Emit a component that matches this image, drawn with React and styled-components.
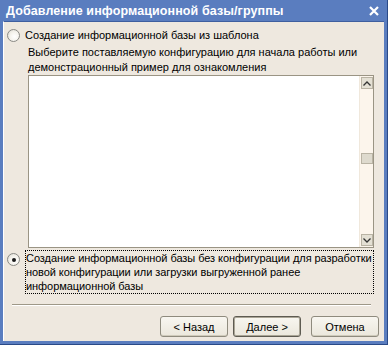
import styled, { createGlobalStyle } from 'styled-components'

const GlobalStyle = createGlobalStyle`
    html, body {
        margin: 0;
        padding: 0;
        background: #ffffff;
    }
    * {
        box-sizing: border-box;
    }
`;

const Window = styled.div`
    width: 388px;
    height: 345px;
    background-color: #5a7dbf;
    border-right: 1px solid #2a4a88;
    border-bottom: 1px solid #2a4a88;
    padding: 0 3px 3px 3px;
    display: flex;
    flex-direction: column;
    font-family: "Liberation Sans", Arial, sans-serif;
    font-size: 11px;
    color: #000;
    overflow: hidden;
`;

const TitleBar = styled.div`
    flex: none;
    height: 21px;
    display: flex;
    align-items: center;
    justify-content: space-between;
    padding: 0 5px 0 3px;
    color: #ffffff;
    font-weight: bold;
    font-size: 12.5px;
    letter-spacing: 0.1px;
    white-space: nowrap;
`;

const Client = styled.div`
    flex: 1;
    min-height: 0;
    background-color: #eee8df;
    border-top: 1px solid #3f5f9f;
    border-left: 1px solid #fff;
    display: flex;
    flex-direction: column;
    padding: 6px 10px 0 3px;
`;

const RadioRow = styled.div`
    flex: none;
    display: flex;
    align-items: flex-start;
    gap: 4px;
    margin-top: ${props => props.$top || 0}px;
`;

const Radio = styled.span`
    flex: none;
    width: 13px;
    height: 13px;
    margin-top: ${props => props.$offset || 0}px;
    margin-right: 1px;
    border-radius: 50%;
    border: 1px solid #8a8a86;
    background: radial-gradient(circle at 60% 60%, #ffffff 0%, #f4f2ec 50%, #d8d6ce 100%);
    display: flex;
    align-items: center;
    justify-content: center;
    &::after {
        content: '';
        display: ${props => (props.$checked ? 'block' : 'none')};
        width: 4px;
        height: 4px;
        border-radius: 50%;
        background: #1a1a1a;
    }
`;

const Label = styled.div`
    line-height: 15px;
    white-space: nowrap;
`;

const FocusLabel = styled.div`
    flex: 1;
    line-height: 14px;
    border: 1px dotted #000;
    padding: 0;
    white-space: nowrap;
    letter-spacing: -0.06px;
`;

const Description = styled.div`
    flex: none;
    margin: 2px 0 0 21px;
    line-height: 15px;
    white-space: nowrap;
`;

const ListBox = styled.div`
    flex: none;
    margin: 0 0 0 21px;
    height: 173px;
    border: 1px solid #9a9484;
    background: #ffffff;
    display: flex;
    justify-content: flex-end;
`;

const ScrollBar = styled.div`
    width: 14px;
    background: #fcf5ec;
    border-left: 1px solid #f0e8dc;
    display: flex;
    flex-direction: column;
    align-items: center;
    justify-content: space-between;
    padding: 1px 0 1px 1px;
`;

const ScrollButton = styled.div`
    width: 12px;
    height: 12px;
    background: #e4e0d4;
    border: 1px solid #b9b3a4;
    display: flex;
    align-items: center;
    justify-content: center;
`;

const Thumb = styled.div`
    width: 12px;
    height: 11px;
    background: #dedace;
    border: 1px solid #b9b3a4;
`;

const Track = styled.div`
    flex: 1;
    display: flex;
    flex-direction: column;
    justify-content: center;
    padding-bottom: 6px;
`;

const Separator = styled.div`
    flex: none;
    margin: 10px 3px 0 5px;
    height: 2px;
    border-top: 1px solid #9e9888;
    border-bottom: 1px solid #ffffff;
`;

const ButtonBar = styled.div`
    flex: none;
    display: flex;
    justify-content: flex-end;
    margin-top: 10px;
    margin-right: -5px;
`;

const Button = styled.div`
    width: 68px;
    height: 21px;
    margin-left: ${props => props.$gap || 0}px;
    border: 1px solid ${props => (props.$default ? '#5e5b52' : '#8f8b7e')};
    box-shadow: ${props => (props.$default ? 'inset 0 0 0 1px #aaa596' : 'inset 0 -1px 0 #cfcabb')};
    border-radius: 3px;
    background: linear-gradient(#f8f6f0, #ebe7dc);
    display: flex;
    align-items: center;
    justify-content: center;
    font-size: 11px;
`;

const Chevron = ({ up }) => (
    <svg width="8" height="5" viewBox="0 0 8 5">
        <path d={up ? 'M0.5 4.5 L4 1 L7.5 4.5' : 'M0.5 0.5 L4 4 L7.5 0.5'} stroke="#333" strokeWidth="1.3" fill="none" />
    </svg>
);

const CloseIcon = () => (
    <svg width="10" height="10" viewBox="0 0 10 10">
        <path d="M1 1 L9 9 M9 1 L1 9" stroke="#ffffff" strokeWidth="2.2" />
    </svg>
);

const App = () => {
    return (
        <Window>
            <GlobalStyle />
            <TitleBar>
                <span>Добавление информационной базы/группы</span>
                <CloseIcon />
            </TitleBar>
            <Client>
                <RadioRow $top={0}>
                    <Radio $offset={1} />
                    <Label>Создание информационной базы из шаблона</Label>
                </RadioRow>
                <Description>
                    Выберите поставляемую конфигурацию для начала работы или<br />
                    демонстрационный пример для ознакомления
                </Description>
                <ListBox>
                    <ScrollBar>
                        <ScrollButton><Chevron up /></ScrollButton>
                        <Track><Thumb /></Track>
                        <ScrollButton><Chevron /></ScrollButton>
                    </ScrollBar>
                </ListBox>
                <RadioRow $top={2}>
                    <Radio $checked $offset={3} />
                    <FocusLabel>
                        Создание информационной базы без конфигурации для разработки<br />
                        новой конфигурации или загрузки выгруженной ранее<br />
                        информационной базы
                    </FocusLabel>
                </RadioRow>
                <Separator />
                <ButtonBar>
                    <Button>&lt; Назад</Button>
                    <Button $default $gap={5}>Далее &gt;</Button>
                    <Button $gap={10}>Отмена</Button>
                </ButtonBar>
            </Client>
        </Window>
    )
}

export default App;
